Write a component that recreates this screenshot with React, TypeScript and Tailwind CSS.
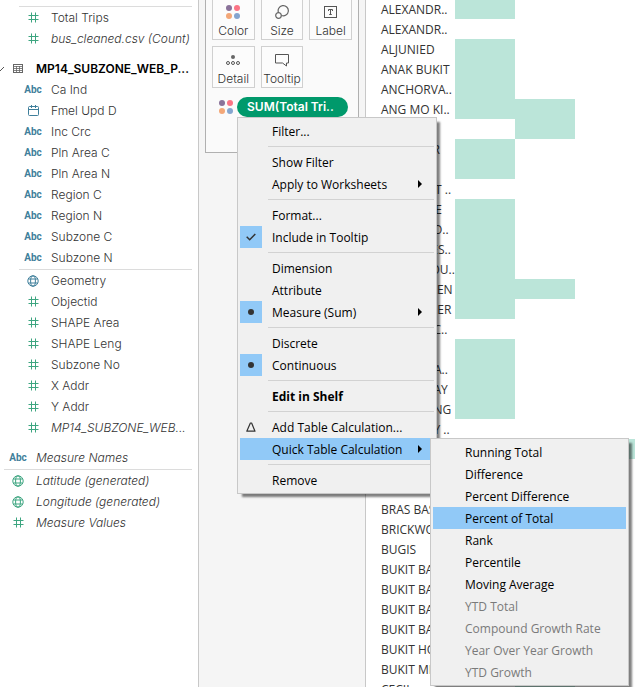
import React from "react";

type Kind = "abc" | "num" | "date" | "globe";
type Field = { kind: Kind; name: string; italic?: boolean; green?: boolean };

const tableFields: Field[] = [
  { kind: "abc", name: "Ca Ind" },
  { kind: "date", name: "Fmel Upd D" },
  { kind: "abc", name: "Inc Crc" },
  { kind: "abc", name: "Pln Area C" },
  { kind: "abc", name: "Pln Area N" },
  { kind: "abc", name: "Region C" },
  { kind: "abc", name: "Region N" },
  { kind: "abc", name: "Subzone C" },
  { kind: "abc", name: "Subzone N" },
];

const measureFields: Field[] = [
  { kind: "globe", name: "Geometry" },
  { kind: "num", name: "Objectid" },
  { kind: "num", name: "SHAPE Area" },
  { kind: "num", name: "SHAPE Leng" },
  { kind: "num", name: "Subzone No" },
  { kind: "num", name: "X Addr" },
  { kind: "num", name: "Y Addr" },
  { kind: "num", name: "MP14_SUBZONE_WEB...", italic: true },
];

const generatedFields: Field[] = [
  { kind: "globe", name: "Latitude (generated)", italic: true, green: true },
  { kind: "globe", name: "Longitude (generated)", italic: true, green: true },
  { kind: "num", name: "Measure Values", italic: true },
];

/* Each row: label, then which of the three columns carry a mark. */
const rows: [string, string][] = [
  ["ALEXANDR..", "1"],
  ["ALEXANDR..", ""],
  ["ALJUNIED", "1"],
  ["ANAK BUKIT", "1"],
  ["ANCHORVA..", "1"],
  ["ANG MO KI..", "12"],
  ["ANSON", "2"],
  ["BALESTIER", "1"],
  ["BANGKIT", "1"],
  ["BAYFRONT ..", ""],
  ["BAYSHORE", "1"],
  ["BEDOK NO..", "1"],
  ["BEDOK RES..", "1"],
  ["BEDOK SOU..", "1"],
  ["BENCOOLEN", "12"],
  ["BENDEMEER", "1"],
  ["BENOI SEC..", ""],
  ["BIDADARI", "1"],
  ["BISHAN EA..", "1"],
  ["BOAT QUAY", "1"],
  ["BOON KENG", "1"],
  ["BOON LAY ..", ""],
  ["BOON TECK", "3"],
  ["BOULEVARD", ""],
  ["BRADDELL", ""],
  ["BRAS BASAH", ""],
  ["BRICKWOR..", ""],
  ["BUGIS", ""],
  ["BUKIT BAT..", ""],
  ["BUKIT BAT..", ""],
  ["BUKIT BAT..", ""],
  ["BUKIT BAT..", ""],
  ["BUKIT HO ..", ""],
  ["BUKIT MER..", ""],
  ["CECIL", "2"],
];

function KindIcon({ kind, green }: { kind: Kind; green?: boolean }) {
  if (kind === "abc") {
    return <span className="font-['Roboto',sans-serif] text-[10px] font-bold text-[#3f7f9b]">Abc</span>;
  }
  if (kind === "num") {
    return (
      <svg width="11" height="11" viewBox="0 0 11 11" fill="none" stroke="#3da580" aria-hidden="true">
        <path d="M3.5 0.5v10M7.5 0.5v10M0.5 3.5h10M0.5 7.5h10" />
      </svg>
    );
  }
  if (kind === "date") {
    return (
      <svg width="11" height="11" viewBox="0 0 11 11" fill="none" stroke="#3f7f9b" aria-hidden="true">
        <rect x="0.5" y="1.5" width="10" height="9" rx="1" />
        <path d="M0.5 4.5h10M3.5 0v3M7.5 0v3" />
      </svg>
    );
  }
  return (
    <svg width="12" height="12" viewBox="0 0 12 12" fill="none" stroke={green ? "#3da580" : "#3f7f9b"} aria-hidden="true">
      <circle cx="6" cy="6" r="5.2" />
      <ellipse cx="6" cy="6" rx="2.4" ry="5.2" />
      <path d="M1.4 4h9.2M1.4 8h9.2" />
    </svg>
  );
}

function FieldRow({ field, outer }: { field: Field; outer?: boolean }) {
  return (
    <li>
      <button className={`flex h-[21px] w-full items-center text-left ${outer ? "pl-[9px]" : "pl-6"}`}>
        <span className="flex w-[18px] shrink-0 items-center justify-center">
          <KindIcon kind={field.kind} green={field.green} />
        </span>
        <span className={`ml-[9px] whitespace-nowrap ${field.italic ? "italic" : ""}`}>{field.name}</span>
      </button>
    </li>
  );
}

function Sidebar() {
  return (
    <aside className="w-[199px] shrink-0 overflow-hidden border-r border-[#c8c8c8] bg-white pt-[6px] font-['Inter',sans-serif] text-[12px] font-light text-[#333]">
      <hr className="mr-[6px] ml-[19px] border-[#dcdcdc]" />
      <ul>
        <FieldRow field={{ kind: "num", name: "Total Trips" }} />
        <FieldRow field={{ kind: "num", name: "bus_cleaned.csv (Count)", italic: true }} />
      </ul>
      <button className="mt-[9px] flex h-[21px] w-full items-center text-left font-semibold whitespace-nowrap text-black">
        <svg className="w-[4px] shrink-0" height="6" viewBox="0 0 4 6" fill="none" stroke="#555" aria-hidden="true">
          <path d="M-1 3.5l1 1.5L4 1" />
        </svg>
        <svg className="ml-[9px] shrink-0" width="10" height="9" viewBox="0 0 10 9" fill="none" stroke="#666" aria-hidden="true">
          <rect x="0.5" y="0.5" width="9" height="8" />
          <path d="M0 2.5h10M0 4.5h10M0 6.5h10M3.5 2v7M6.5 2v7" strokeWidth="0.8" />
        </svg>
        <span className="ml-[13px]">MP14_SUBZONE_WEB_P...</span>
      </button>
      <ul>
        {tableFields.map((f) => (
          <FieldRow key={f.name} field={f} />
        ))}
      </ul>
      <hr className="mt-px mr-[6px] ml-[19px] border-[#dcdcdc]" />
      <ul>
        {measureFields.map((f) => (
          <FieldRow key={f.name} field={f} />
        ))}
      </ul>
      <ul className="mt-[9px]">
        <FieldRow outer field={{ kind: "abc", name: "Measure Names", italic: true }} />
      </ul>
      <hr className="mt-px mr-[6px] ml-1 border-[#dcdcdc]" />
      <ul>
        {generatedFields.map((f) => (
          <FieldRow key={f.name} outer field={f} />
        ))}
      </ul>
    </aside>
  );
}

function ColorDots() {
  return (
    <svg width="14" height="14" viewBox="0 0 14 14" aria-hidden="true">
      <circle cx="3" cy="3" r="3" fill="#8a7299" />
      <circle cx="11" cy="3" r="3" fill="#fb7485" />
      <circle cx="3" cy="11" r="3" fill="#f3a778" />
      <circle cx="11" cy="11" r="3" fill="#85a5cf" />
    </svg>
  );
}

function MarkButton({ label, children }: { label: string; children: React.ReactNode }) {
  return (
    <button className="flex h-[42px] flex-col items-center justify-between border border-[#d0d0d0] bg-[#fcfcfc] pt-[6px] text-[#333]">
      <span className="flex h-[14px] items-center justify-center">{children}</span>
      <span className="text-[12px] leading-[17px] font-light">{label}</span>
    </button>
  );
}

type Item = { label: string; mark?: "check" | "dot" | "delta"; arrow?: boolean; bold?: boolean; active?: boolean; off?: boolean; sub?: Item[] };

const menuGroups: Item[][] = [
  [{ label: "Filter..." }],
  [{ label: "Show Filter" }, { label: "Apply to Worksheets", arrow: true }],
  [{ label: "Format..." }, { label: "Include in Tooltip", mark: "check" }],
  [{ label: "Dimension" }, { label: "Attribute" }, { label: "Measure (Sum)", mark: "dot", arrow: true }],
  [{ label: "Discrete" }, { label: "Continuous", mark: "dot" }],
  [{ label: "Edit in Shelf", bold: true }],
  [
    { label: "Add Table Calculation...", mark: "delta" },
    {
      label: "Quick Table Calculation",
      arrow: true,
      active: true,
      sub: [
        { label: "Running Total" },
        { label: "Difference" },
        { label: "Percent Difference" },
        { label: "Percent of Total", active: true },
        { label: "Rank" },
        { label: "Percentile" },
        { label: "Moving Average" },
        { label: "YTD Total", off: true },
        { label: "Compound Growth Rate", off: true },
        { label: "Year Over Year Growth", off: true },
        { label: "YTD Growth", off: true },
      ],
    },
  ],
  [{ label: "Remove" }],
];

function ItemMark({ mark }: { mark?: Item["mark"] }) {
  return (
    <span className={`flex h-[22px] w-[22px] items-center justify-center ${mark === "check" || mark === "dot" ? "bg-[#91c9f7]" : ""}`}>
      {mark === "check" && (
        <svg width="10" height="8" viewBox="0 0 10 8" fill="none" stroke="#333" strokeWidth="1.5" aria-hidden="true">
          <path d="M0.7 3.7l3 3L9.3 1" />
        </svg>
      )}
      {mark === "dot" && <span className="h-[6px] w-[6px] rounded-full bg-[#333]" />}
      {mark === "delta" && (
        <svg width="10" height="10" viewBox="0 0 10 10" fill="none" stroke="#333" strokeWidth="1.2" aria-hidden="true">
          <path d="M0.8 9.2h8.2L5.6 1H4.4z" strokeLinejoin="round" />
        </svg>
      )}
    </span>
  );
}

const menuBox =
  "border border-[#c8c8c8] bg-[#f0f0f0] p-[2px] shadow-[4px_4px_2px_-1px_rgba(0,0,0,0.5)] font-['Open_Sans','Noto_Sans',sans-serif] text-[12px]";

function MenuItem({ item }: { item: Item }) {
  return (
    <li className="relative">
      <button
        role="menuitem"
        disabled={item.off}
        className={`flex h-[22px] w-full items-center text-left whitespace-nowrap ${item.active ? "bg-[#91c9f7]" : ""} ${item.off ? "text-[#7a7a7a]" : "text-black"} ${item.bold ? "font-bold" : ""}`}
      >
        <ItemMark mark={item.mark} />
        <span className="ml-[10px] flex-1 pt-[2px]">{item.label}</span>
        {item.arrow && (
          <svg className="mr-3" width="4" height="8" viewBox="0 0 4 8" aria-hidden="true">
            <path d="M0 0l4 4-4 4z" fill="#000" />
          </svg>
        )}
      </button>
      {item.sub && (
        <ul role="menu" className={`absolute top-0 left-full -ml-1 w-[199px] ${menuBox}`}>
          {item.sub.map((s) => (
            <MenuItem key={s.label} item={s} />
          ))}
        </ul>
      )}
    </li>
  );
}

function ContextMenu() {
  return (
    <div role="menu" className={`absolute top-full left-0 z-10 w-[200px] ${menuBox}`}>
      {menuGroups.map((group, i) => (
        <ul key={i}>
          {i > 0 && <li role="separator" className="my-1 ml-7 h-px bg-[#d2d2d2]" />}
          {group.map((item) => (
            <MenuItem key={item.label} item={item} />
          ))}
        </ul>
      ))}
    </div>
  );
}

function MarksPanel() {
  return (
    <section className="w-[167px] shrink-0 border-r border-[#c8c8c8] bg-[#f5f5f5] px-[6px] font-['Inter',sans-serif]">
      <div className="-mt-2 h-[161px] border border-[#b0b0b0] bg-[#fafafa] px-[6px] pt-[5px]">
        <div className="grid grid-cols-3 gap-[6px]">
          <MarkButton label="Color">
            <ColorDots />
          </MarkButton>
          <MarkButton label="Size">
            <svg width="14" height="14" viewBox="0 0 14 14" fill="none" stroke="#666" strokeWidth="1.2" aria-hidden="true">
              <path d="M3.6 7.8A5.1 5.1 0 1 1 6.5 10.5" />
              <circle cx="3.5" cy="10.5" r="2.8" />
            </svg>
          </MarkButton>
          <MarkButton label="Label">
            <svg width="13" height="12" viewBox="0 0 13 12" fill="none" stroke="#555" aria-hidden="true">
              <rect x="0.5" y="0.5" width="12" height="11" />
              <path d="M4.5 5V3.5h4V5M6.5 3.5v5M5.2 8.5h2.6" />
            </svg>
          </MarkButton>
          <MarkButton label="Detail">
            <svg width="14" height="12" viewBox="0 0 14 12" fill="none" stroke="#555" aria-hidden="true">
              <circle cx="7" cy="3" r="2" fill="#666" stroke="none" />
              <circle cx="2" cy="9" r="1.5" />
              <circle cx="7" cy="9" r="1.5" />
              <circle cx="12" cy="9" r="1.5" />
            </svg>
          </MarkButton>
          <MarkButton label="Tooltip">
            <svg width="14" height="13" viewBox="0 0 14 13" fill="none" stroke="#555" aria-hidden="true">
              <path d="M0.5 0.5h13v8.5h-2v3l-4-3h-7z" />
            </svg>
          </MarkButton>
        </div>
        <div className="mt-[9px] flex items-center pl-[7px]">
          <ColorDots />
          <div className="relative ml-1 flex-1">
            <button className="block h-5 w-[111px] rounded-full bg-[#00996b] pl-[10px] text-left text-[12px] font-semibold whitespace-nowrap text-white">
              SUM(Total Tri..
            </button>
            <ContextMenu />
          </div>
        </div>
      </div>
    </section>
  );
}

function Chart() {
  return (
    <main className="min-w-0 flex-1 overflow-hidden bg-white">
      <table className="-mt-px w-full table-fixed border-collapse">
        <colgroup>
          <col className="w-[89px]" />
          <col className="w-[60px]" />
          <col className="w-[60px]" />
          <col />
        </colgroup>
        <tbody>
          {rows.map(([label, marks], i) => (
            <tr key={i} className="h-5">
              <th scope="row" className="p-0 pt-[2px] pl-[15px] text-left font-['Open_Sans','Noto_Sans',sans-serif] text-[12px] leading-[18px] font-normal whitespace-nowrap text-[#333]">
                {label}
              </th>
              <td className={marks.includes("1") ? "bg-[#bbe5d9] p-0" : "p-0"} />
              <td className={marks.includes("2") ? "bg-[#bbe5d9] p-0" : "p-0"} />
              <td className={marks.includes("3") ? "bg-[#bbe5d9] p-0" : "p-0"} />
            </tr>
          ))}
        </tbody>
      </table>
    </main>
  );
}

export default function App() {
  return (
    <div className="flex h-screen overflow-hidden bg-white">
      <Sidebar />
      <MarksPanel />
      <Chart />
    </div>
  );
}
